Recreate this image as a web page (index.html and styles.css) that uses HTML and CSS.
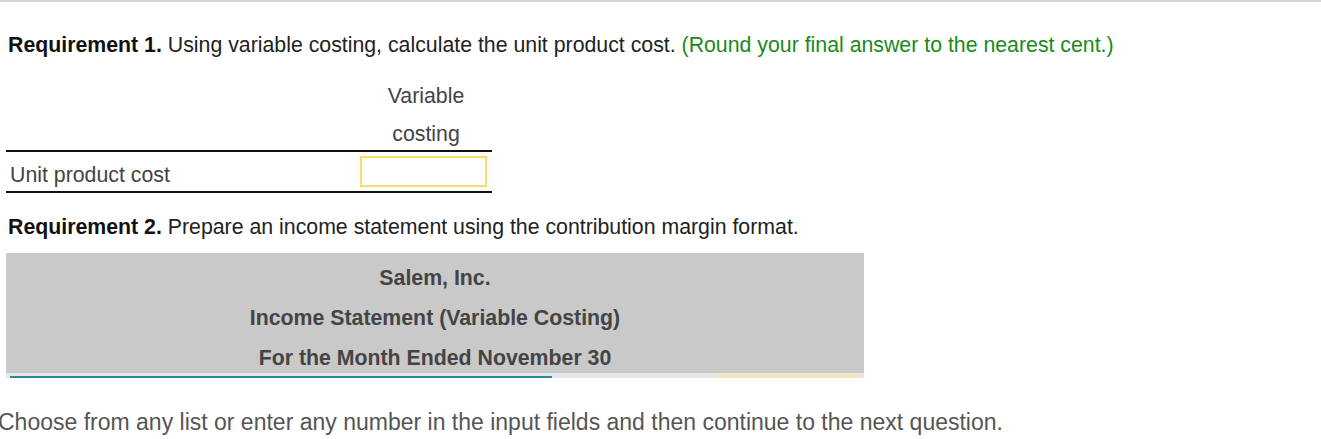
FILE: index.html
```html
<!DOCTYPE html>
<html>
<head>
<meta charset="utf-8">
<link rel="stylesheet" href="styles.css">
</head>
<body>
<div class="topline"></div>
<div class="content">
  <p class="req req1"><b>Requirement 1.</b> Using variable costing, calculate the unit product cost. <span class="hint">(Round your final answer to the nearest cent.)</span></p>
  <table class="t1">
    <tr class="hrow first"><td class="lbl"></td><td class="col">Variable</td></tr>
    <tr class="hrow last"><td class="lbl"></td><td class="col">costing</td></tr>
    <tr class="drow"><td class="lbl">Unit product cost</td><td class="col"><div class="inp"></div></td></tr>
  </table>
  <p class="req req2"><b>Requirement 2.</b> Prepare an income statement using the contribution margin format.</p>
  <div class="stmt">
    <div class="head">
      <div class="hl">Salem, Inc.</div>
      <div class="hl">Income Statement (Variable Costing)</div>
      <div class="hl">For the Month Ended November 30</div>
    </div>
    <div class="strip">
      <div class="teal"></div>
      <div class="yel"></div>
    </div>
  </div>
</div>
<div class="footer">Choose from any list or enter any number in the input fields and then continue to the next question.</div>
</body>
</html>
```

FILE: styles.css
```css
html, body { margin: 0; padding: 0; background: #fff; }
body { font-family: "Liberation Sans", Arial, sans-serif; color: #333; width: 1321px; height: 439px; overflow: hidden; position: relative; }
.topline { height: 2px; background: #d4d6da; }
.content { padding: 0 0 0 8px; }
.req { margin: 0; font-size: 21.3px; color: #222; line-height: 24px; }
.req b { color: #111; }
.req1 { padding-top: 31px; }
.hint { color: #1a8a1a; }
.t1 { border-collapse: collapse; margin-top: 18px; margin-left: -2px; width: 486px; }
.t1 td { padding: 0; font-size: 21.3px; color: #444; }
.hrow td { height: 38px; box-sizing: border-box; vertical-align: bottom; line-height: 24px; }
.hrow.first td { padding-bottom: 5px; }
.hrow.last td { padding-bottom: 4px; border-bottom: 2px solid #111; }
.col { width: 132px; text-align: center; }
.drow td { height: 39px; border-bottom: 2px solid #111; vertical-align: middle; }
.drow .lbl { padding-left: 4px; padding-top: 7px; height: 32px; }
.inp { width: 123px; height: 27px; border: 2px solid #f7de6b; margin-left: 0; box-sizing: content-box; }
.req2 { margin-top: 22px; }
.stmt { width: 858px; margin-left: -2px; margin-top: 14px; }
.head { background: #c9c9c9; }
.hl { text-align: center; font-weight: bold; font-size: 21.3px; color: #444; line-height: 31px; height: 30px; padding-top: 10px; }
.strip { height: 5px; background: #e6e6e6; position: relative; }
.teal { position: absolute; left: 4px; top: 3px; width: 542px; height: 2px; background: #2a8a9a; }
.yel { position: absolute; left: 709px; top: 2px; width: 147px; height: 2px; background: #f7e7a0; }
.footer { position: absolute; left: -2px; top: 409px; font-size: 23px; color: #555; white-space: nowrap; }
```
